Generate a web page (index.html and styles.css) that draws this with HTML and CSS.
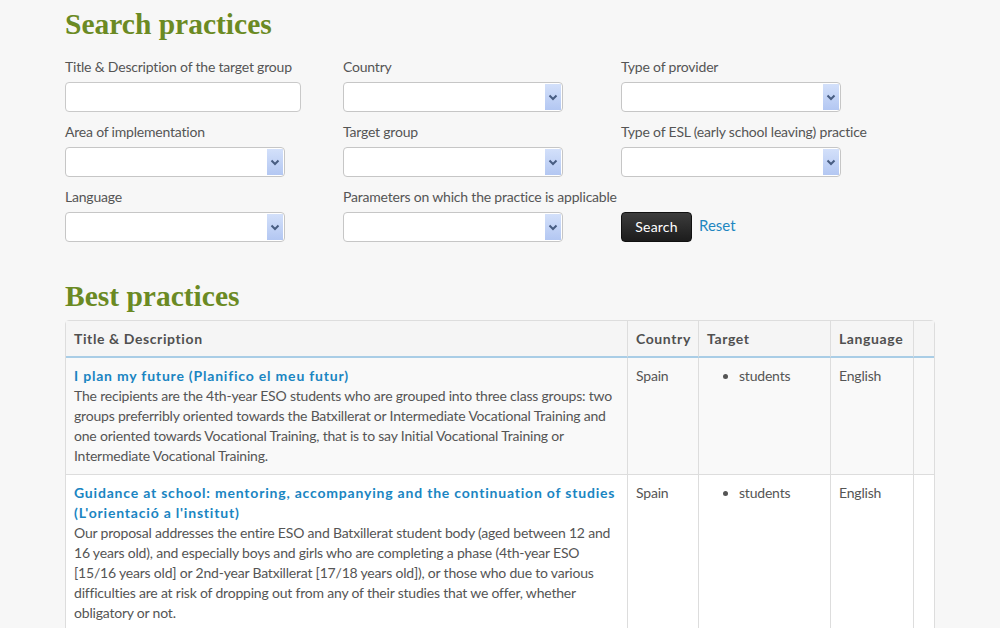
FILE: index.html
```html
<!DOCTYPE html>
<html>
<head>
<meta charset="utf-8">
<link rel="stylesheet" href="styles.css">
</head>
<body>
<div class="page">
  <h1 class="heading">Search practices</h1>
  <form class="search-grid">
    <div class="field">
      <label class="label">Title &amp; Description of the target group</label>
      <input class="text-input" type="text">
    </div>
    <div class="field">
      <label class="label">Country</label>
      <select class="select"><option></option></select>
    </div>
    <div class="field">
      <label class="label">Type of provider</label>
      <select class="select"><option></option></select>
    </div>
    <div class="field">
      <label class="label">Area of implementation</label>
      <select class="select"><option></option></select>
    </div>
    <div class="field">
      <label class="label">Target group</label>
      <select class="select"><option></option></select>
    </div>
    <div class="field">
      <label class="label">Type of ESL (early school leaving) practice</label>
      <select class="select"><option></option></select>
    </div>
    <div class="field">
      <label class="label">Language</label>
      <select class="select"><option></option></select>
    </div>
    <div class="field">
      <label class="label">Parameters on which the practice is applicable</label>
      <select class="select"><option></option></select>
    </div>
    <div class="field actions">
      <button type="button" class="btn">Search</button>
      <a href="#" class="reset">Reset</a>
    </div>
  </form>

  <h2 class="heading heading-2">Best practices</h2>
  <table class="results">
    <thead>
      <tr>
        <th class="c-title">Title &amp; Description</th>
        <th class="c-country">Country</th>
        <th class="c-target">Target</th>
        <th class="c-lang">Language</th>
        <th class="c-extra"></th>
      </tr>
    </thead>
    <tbody>
      <tr class="odd">
        <td>
          <a href="#" class="title-link">I plan my future (Planifico el meu futur)</a>
          <p class="desc">The recipients are the 4th-year ESO students who are grouped into three class groups: two groups preferribly oriented towards the Batxillerat or Intermediate Vocational Training and one oriented towards Vocational Training, that is to say Initial Vocational Training or Intermediate Vocational Training.</p>
        </td>
        <td>Spain</td>
        <td><ul class="tlist"><li>students</li></ul></td>
        <td>English</td>
        <td></td>
      </tr>
      <tr class="even">
        <td>
          <a href="#" class="title-link">Guidance at school: mentoring, accompanying and the continuation of studies (L'orientació a l'institut)</a>
          <p class="desc">Our proposal addresses the entire ESO and Batxillerat student body (aged between 12 and 16 years old), and especially boys and girls who are completing a phase (4th-year ESO [15/16 years old] or 2nd-year Batxillerat [17/18 years old]), or those who due to various difficulties are at risk of dropping out from any of their studies that we offer, whether obligatory or not.</p>
        </td>
        <td>Spain</td>
        <td><ul class="tlist"><li>students</li></ul></td>
        <td>English</td>
        <td></td>
      </tr>
    </tbody>
  </table>
</div>
</body>
</html>
```

FILE: styles.css
```css
html, body {
  margin: 0;
  padding: 0;
  background: #f7f7f7;
  font-family: "Lato", "Liberation Sans", sans-serif;
  font-size: 14px;
  color: #555;
}

.page {
  width: 870px;
  margin: 0 auto;
  padding-top: 7px;
}

.heading {
  font-family: "Liberation Serif", serif;
  font-weight: bold;
  font-size: 29.5px;
  line-height: 34px;
  color: #6b8a23;
  margin: 0 0 16px 0;
}

.heading-2 {
  margin: 0 0 7px 0;
}

.search-grid {
  display: grid;
  grid-template-columns: 278px 278px 314px;
  row-gap: 10px;
  margin: 0 0 37px 0;
}

.field {
  display: flex;
  flex-direction: column;
  align-items: flex-start;
  letter-spacing: -0.2px;
}

.label {
  line-height: 20px;
  margin-bottom: 5px;
  color: #555;
  white-space: nowrap;
}

.text-input {
  box-sizing: border-box;
  width: 236px;
  height: 30px;
  border: 1px solid #c9c9c9;
  border-radius: 4px;
  background: #fff;
  margin: 0;
}

.select {
  appearance: none;
  -webkit-appearance: none;
  box-sizing: border-box;
  width: 220px;
  height: 30px;
  margin: 0;
  border: 1px solid #c6c6c6;
  border-radius: 4px;
  background-color: #fff;
  background-image:
    url("data:image/svg+xml;utf8,<svg xmlns='http://www.w3.org/2000/svg' width='16' height='26'><path d='M4.5 11.5 L8 15 L11.5 11.5' fill='none' stroke='%23485d82' stroke-width='2'/></svg>"),
    linear-gradient(#d3e0fa, #b3c7f2);
  background-repeat: no-repeat, no-repeat;
  background-position: right 1px top 1px, right 1px top 1px;
  background-size: 16px 26px, 16px 26px;
}

.actions {
  flex-direction: row;
  align-items: center;
  padding-top: 25px;
  gap: 7px;
  letter-spacing: 0;
}

.btn {
  box-sizing: border-box;
  height: 30px;
  width: 71px;
  border: 1px solid #111;
  border-radius: 4px;
  background: linear-gradient(#3c3c3c, #1c1c1c);
  color: #fff;
  font-family: "Lato", "Liberation Sans", sans-serif;
  font-size: 14px;
  letter-spacing: 0.2px;
  padding: 0 0 1px 0;
  margin: 0;
}

.reset {
  color: #1f87c1;
  text-decoration: none;
  font-size: 15px;
  margin-top: -4px;
}

.results {
  width: 870px;
  border-collapse: separate;
  border-spacing: 0;
  border: 1px solid #ddd;
  border-radius: 4px;
  table-layout: fixed;
}

.results th,
.results td {
  text-align: left;
  vertical-align: top;
  padding: 8px;
  line-height: 20px;
  border-left: 1px solid #ddd;
}

.results td {
  letter-spacing: -0.2px;
}

.results th:first-child,
.results td:first-child {
  border-left: none;
}

.results th {
  background: #f5f5f5;
  color: #505050;
  font-weight: bold;
  letter-spacing: 0.6px;
  padding-bottom: 7px;
  border-bottom: 2px solid #a9cde6;
}

.c-title { width: 545px; }
.c-country { width: 54px; }
.c-target { width: 115px; }
.c-lang { width: 66px; }
.c-extra { width: auto; }

.results tbody tr.odd td {
  background: #f9f9f9;
}

.results tbody tr.even td {
  background: #fff;
  border-top: 1px solid #ddd;
}

.title-link {
  color: #1a85c2;
  font-weight: bold;
  text-decoration: none;
  letter-spacing: 0.8px;
}

.desc {
  margin: 0;
}

.tlist {
  margin: 0;
  padding-left: 32px;
}
```
